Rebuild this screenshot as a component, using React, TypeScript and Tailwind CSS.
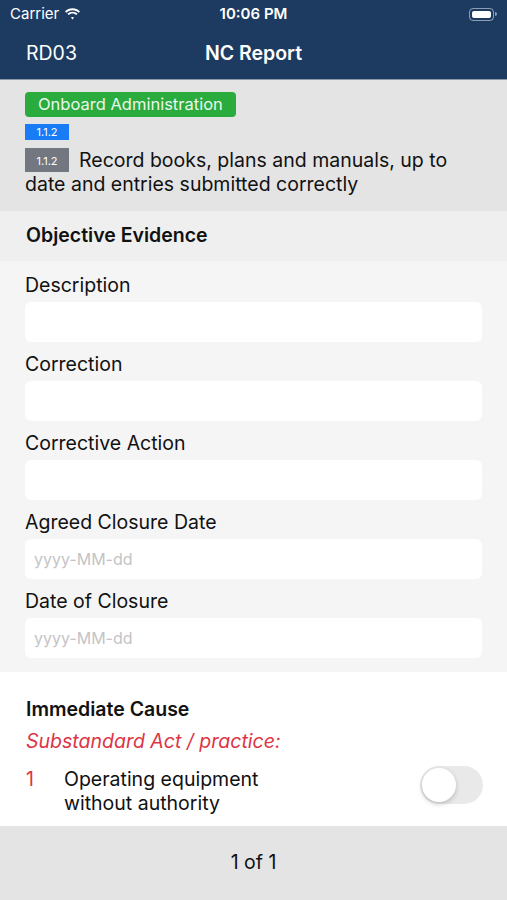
import { useState } from "react";

const font = { fontFamily: "Inter, 'Noto Sans', sans-serif" };

function StatusBar() {
  return (
    <div className="relative flex h-[28px] items-center px-[10px] text-white">
      <div className="flex items-center gap-[5px] text-[15px]">
        <span>Carrier</span>
        <svg width="17" height="12" viewBox="0 0 17 12" fill="white">
          <path d="M8.5 2.2c2.4 0 4.6.9 6.2 2.5l1.3-1.3C14 1.4 11.4.3 8.5.3S3 1.4 1 3.4l1.3 1.3C3.9 3.1 6.1 2.2 8.5 2.2z" />
          <path d="M8.5 5.6c1.5 0 2.8.6 3.8 1.5l1.3-1.3C12.3 4.5 10.5 3.7 8.5 3.7S4.7 4.5 3.4 5.8l1.3 1.3c1-.9 2.3-1.5 3.8-1.5z" />
          <path d="M8.5 8.9c.6 0 1.2.3 1.6.7L8.5 11.5 6.9 9.6c.4-.4 1-.7 1.6-.7z" />
        </svg>
      </div>
      <div className="absolute left-0 right-0 text-center text-[15px] font-semibold">10:06 PM</div>
      <div className="ml-auto flex items-center">
        <div className="h-[13px] w-[25px] rounded-[4px] border border-white/50 p-[2px]">
          <div className="h-full w-full rounded-[2px] bg-white" />
        </div>
        <div className="ml-[1px] h-[4px] w-[2px] rounded-r bg-white/50" />
      </div>
    </div>
  );
}

function Field({ label, placeholder }: { label: string; placeholder?: string }) {
  return (
    <div className="flex flex-col">
      <label className="h-[39px] pt-[11px] text-[19.5px] leading-[23px] text-[#111]">{label}</label>
      <div className="flex h-[40px] items-center rounded-[6px] bg-white px-[9px] text-[16px] text-[#c4c4c6]">
        {placeholder}
      </div>
    </div>
  );
}

export default function App() {
  const [on, setOn] = useState(false);

  return (
    <div className="flex h-[900px] w-[507px] flex-col overflow-hidden bg-white" style={font}>
      {/* Header */}
      <div className="bg-[#1d3b60]">
        <StatusBar />
        <div className="relative flex h-[51px] items-center px-[26px] text-white">
          <span className="text-[19.5px]">RD03</span>
          <span className="absolute left-0 right-0 text-center text-[19.5px] font-semibold">NC Report</span>
        </div>
      </div>
      <div className="h-px bg-[#8a97a8]" />

      {/* Item */}
      <div className="bg-[#e4e4e4] px-[25px] pb-[15px] pt-[12px]">
        <div className="inline-flex h-[25px] items-center rounded-[4px] bg-[#2aab3e] px-[13px] text-[16.5px] text-[#e9f7ec]">
          Onboard Administration
        </div>
        <div className="mt-[7px] flex">
          <span className="flex h-[16px] w-[44px] items-center justify-center bg-[#1a7cf5] text-[11px] text-white">1.1.2</span>
        </div>
        <div className="mt-[8px] text-[19.5px] leading-[24px] text-[#111]">
          <div className="flex">
            <span className="mr-[10px] h-[24px] w-[44px] shrink-0 bg-[#737880] pt-[6px] text-center text-[11px] leading-[14px] text-white">
              1.1.2
            </span>
            <span>Record books, plans and manuals, up to</span>
          </div>
          <div>date and entries submitted correctly</div>
        </div>
      </div>

      {/* Objective Evidence */}
      <div className="flex h-[50px] items-center bg-[#efefef] px-[26px] text-[19.5px] font-semibold text-[#111]">
        Objective Evidence
      </div>
      <div className="flex flex-col bg-[#f5f5f5] px-[25px] pb-[14px] pt-[2px]">
        <Field label="Description" />
        <Field label="Correction" />
        <Field label="Corrective Action" />
        <Field label="Agreed Closure Date" placeholder="yyyy-MM-dd" />
        <Field label="Date of Closure" placeholder="yyyy-MM-dd" />
      </div>

      {/* Immediate Cause */}
      <div className="flex-1 bg-white px-[26px] pt-[25px]">
        <div className="text-[19.5px] font-semibold leading-[24px] text-[#111]">Immediate Cause</div>
        <div className="mt-[8px] text-[19.5px] italic leading-[24px] text-[#dc3545]">Substandard Act / practice:</div>
        <div className="mt-[14px] flex items-start">
          <span className="w-[38px] text-[19.5px] leading-[24px] text-[#dc3545]">1</span>
          <span className="w-[225px] text-[19.5px] leading-[24px] text-[#111]">Operating equipment without authority</span>
          <button
            onClick={() => setOn(!on)}
            className={`ml-auto mr-[-2px] mt-[-1px] flex h-[38px] w-[63px] items-center rounded-full p-[2px] ${on ? "justify-end bg-[#34c759]" : "bg-[#e9e9ea]"}`}
          >
            <span className="h-[34px] w-[34px] rounded-full bg-white shadow-[0_2px_5px_rgba(0,0,0,0.2)]" />
          </button>
        </div>
      </div>

      {/* Footer */}
      <div className="flex h-[74px] items-center justify-center bg-[#e4e4e4] text-[19.5px] text-[#111]">1 of 1</div>
    </div>
  );
}
